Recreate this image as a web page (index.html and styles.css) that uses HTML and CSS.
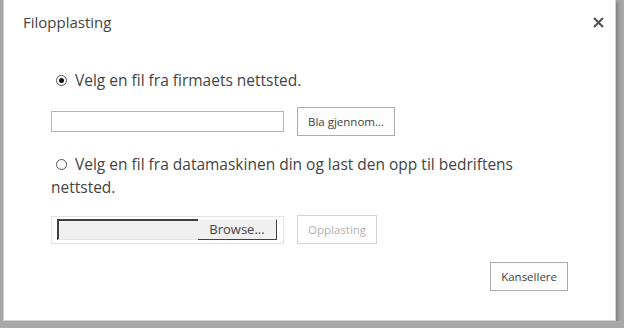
FILE: index.html
```html
<!DOCTYPE html>
<html lang="no">
<head>
    <meta charset="UTF-8">
    <title>Filopplasting</title>
    <link rel="stylesheet" href="styles.css">
</head>
<body>
    <div class="dialog">
        <div class="dialog-header">
            <h1 class="dialog-title">Filopplasting</h1>
            <svg class="dialog-close" width="11" height="11" viewBox="0 0 11 11">
                <path d="M1 1 L10 10 M10 1 L1 10" stroke="#555555" stroke-width="2.2" fill="none"/>
            </svg>
        </div>

        <div class="dialog-body">
            <div class="option">
                <span class="radio checked"></span>Velg en fil fra firmaets nettsted.
            </div>
            <div class="field-row">
                <input type="text" class="text-input">
                <button class="btn">Bla gjennom...</button>
            </div>

            <div class="option option-wrap">
                <span class="radio"></span>Velg en fil fra datamaskinen din og last den opp til bedriftens nettsted.
            </div>
            <div class="field-row field-row-file">
                <div class="file-box">
                    <span class="file-name"></span>
                    <span class="file-browse">Browse...</span>
                </div>
                <button class="btn btn-disabled" disabled>Opplasting</button>
            </div>
        </div>

        <div class="dialog-footer">
            <button class="btn">Kansellere</button>
        </div>
    </div>
</body>
</html>
```

FILE: styles.css
```css
body {
    margin: 0;
    background-color: #a8a8a8;
    font-family: 'Open Sans', 'Noto Sans', sans-serif;
    color: #444444;
}
.dialog {
    width: 613px;
    height: 321px;
    margin-left: 3px;
    background-color: #ffffff;
    border: 1px solid #d2d2d2;
    border-top: none;
    box-sizing: border-box;
    display: flex;
    flex-direction: column;
    box-shadow: 2px 2px 4px rgba(0, 0, 0, 0.25);
}
.dialog-header {
    display: flex;
    justify-content: space-between;
    align-items: flex-start;
    height: 32px;
    box-sizing: border-box;
    padding: 12px 11px 0 19px;
}
.dialog-title {
    margin: 0;
    font-size: 15px;
    line-height: 20px;
    font-weight: 400;
    color: #444444;
}
.dialog-close {
    margin-top: 5px;
}
.dialog-body {
    padding: 37px 0 0 47px;
    flex: 1;
}
.option {
    font-size: 15.5px;
    line-height: 23px;
    width: 520px;
}
.option-wrap {
    margin-top: 17px;
}
.radio {
    display: inline-block;
    width: 11px;
    height: 11px;
    border: 1px solid #555555;
    border-radius: 50%;
    box-sizing: border-box;
    margin: 0 8px 0 5px;
    position: relative;
}
.radio.checked::after {
    content: "";
    position: absolute;
    left: 2px;
    top: 2px;
    width: 5px;
    height: 5px;
    border-radius: 50%;
    background-color: #111111;
}
.field-row {
    display: flex;
    align-items: center;
    gap: 13px;
    margin-top: 15px;
}
.field-row-file {
    margin-top: 16px;
}
.text-input {
    width: 233px;
    height: 21px;
    box-sizing: border-box;
    border: 1px solid #b5b5b5;
    margin: 0;
    padding: 0 4px;
}
.btn {
    font-family: inherit;
    font-size: 11.5px;
    color: #444444;
    background-color: #fdfdfd;
    border: 1px solid #ababab;
    height: 29px;
    padding: 0 10px;
    margin: 0;
}
.btn-disabled {
    color: #b1b1b1;
    border-color: #d5d5d5;
    background-color: #ffffff;
}
.file-box {
    width: 233px;
    height: 28px;
    box-sizing: border-box;
    border: 1px solid #e3e3e3;
    display: flex;
    align-items: center;
    padding-left: 5px;
}
.file-name {
    width: 141px;
    height: 21px;
    box-sizing: border-box;
    background-color: #f0f0f0;
    border-top: 2px solid #404040;
    border-left: 2px solid #404040;
    border-bottom: 1px solid #e3e3e3;
}
.file-browse {
    width: 79px;
    height: 21px;
    box-sizing: border-box;
    background-color: #f0f0f0;
    border-right: 1px solid #404040;
    border-bottom: 1px solid #404040;
    border-top: 1px solid #ffffff;
    font-size: 13px;
    line-height: 19px;
    text-align: center;
    color: #444444;
}
.dialog-footer {
    display: flex;
    justify-content: flex-end;
    padding: 0 47px 29px 0;
}
```
